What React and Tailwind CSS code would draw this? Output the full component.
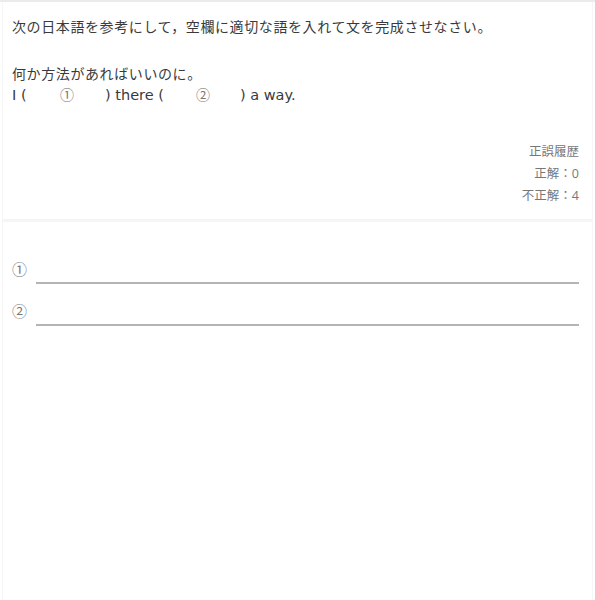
export default function App() {
  const font = { fontFamily: '"Open Sans", "Noto Sans CJK JP", sans-serif' };
  const latin = { fontFamily: '"DejaVu Sans", "Noto Sans CJK JP", sans-serif' };
  const cjk = { fontFamily: '"Noto Sans CJK JP", sans-serif' };
  return (
    <div
      className="w-[595px] h-[600px] bg-white border-t-2 border-[#ebebeb] flex flex-col"
      style={font}
    >
      <div className="mx-[2px] border-x border-[#f6f6f6] flex-1 flex flex-col">
        <section className="pt-[15px] px-[9px] pb-[12px] text-[14px] leading-[20px] text-[#3a3a3a]">
          <p className="tracking-[0.6px]">次の日本語を参考にして，空欄に適切な語を入れて文を完成させなさい。</p>
          <p className="mt-[27px] tracking-[0.6px]">何か方法があればいいのに。</p>
          <p className="flex items-baseline whitespace-pre text-[14.5px]" style={latin}>
            <span className="w-[48px] shrink-0">I (</span>
            <span className="w-[45px] shrink-0 text-[#777] text-[14px]" style={cjk}>①</span>
            <span className="w-[91px] shrink-0">) there (</span>
            <span className="w-[44px] shrink-0 text-[#777] text-[14px]" style={cjk}>②</span>
            <span>) a way.</span>
          </p>
          <div className="mt-[36px] flex flex-col items-end pr-[4px] text-[12.5px] leading-[22px] text-[#777]">
            <span>正誤履歴</span>
            <span>正解：0</span>
            <span>不正解：4</span>
          </div>
        </section>
        <div className="h-[3px] bg-[#f5f5f5]"></div>
        <section className="pt-[37px] px-[9px] flex flex-col gap-[17px]">
          <div className="flex items-start gap-[9px]">
            <span className="text-[15px] leading-[20px] text-[#777]">①</span>
            <div className="flex-1 mt-[23px] mr-[4px] h-[2px] bg-[#b4b4b4]"></div>
          </div>
          <div className="flex items-start gap-[9px]">
            <span className="text-[15px] leading-[20px] text-[#777]">②</span>
            <div className="flex-1 mt-[23px] mr-[4px] h-[2px] bg-[#b4b4b4]"></div>
          </div>
        </section>
      </div>
    </div>
  );
}
